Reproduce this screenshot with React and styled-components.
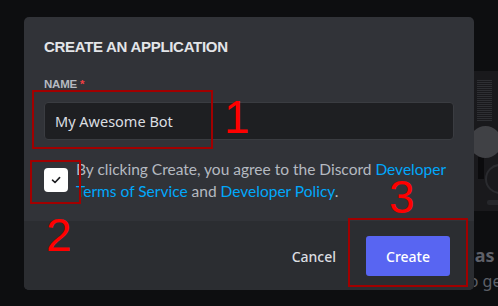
import React from 'react';
import styled, { createGlobalStyle } from 'styled-components';

const GlobalStyle = createGlobalStyle`
  html, body {
    margin: 0;
    padding: 0;
    background: #0d0e10;
    overflow: hidden;
  }
`;

const Page = styled.div`
  display: flex;
  align-items: flex-start;
  width: 498px;
  height: 306px;
  overflow: hidden;
  font-family: "Noto Sans", "Liberation Sans", sans-serif;
`;

const Modal = styled.div`
  position: relative;
  flex: none;
  width: 450px;
  margin: 17px 0 0 24px;
  background: #313338;
  border-radius: 5px;
  overflow: hidden;
  z-index: 2;
`;

const Body = styled.div`
  padding: 20px 20px 19px;
`;

const Title = styled.h1`
  margin: 0;
  font-family: "Liberation Sans", Arial, sans-serif;
  font-size: 15px;
  line-height: 20px;
  font-weight: 700;
  letter-spacing: -0.3px;
  color: #e3e5e8;
`;

const Label = styled.div`
  margin-top: 19px;
  font-family: "Liberation Sans", Arial, sans-serif;
  font-size: 11.5px;
  line-height: 16px;
  font-weight: 700;
  letter-spacing: -0.2px;
  color: #b5bac1;

  span {
    color: #f23f43;
    margin-left: 3px;
  }
`;

const Input = styled.div`
  margin-top: 10px;
  height: 38px;
  box-sizing: border-box;
  display: flex;
  align-items: center;
  padding: 0 10px;
  background: #1e1f22;
  border: 1px solid #3a3c41;
  border-radius: 4px;
  font-size: 14.5px;
  color: #dbdee1;
`;

const CheckRow = styled.div`
  margin-top: 18px;
  display: flex;
  align-items: center;
  gap: 8px;
`;

const Box = styled.div`
  flex: none;
  width: 24px;
  height: 24px;
  border-radius: 4px;
  background: #ffffff;
  display: flex;
  align-items: center;
  justify-content: center;
`;

const Terms = styled.p`
  margin: 0;
  font-family: Lato, "Noto Sans", sans-serif;
  font-size: 15.5px;
  line-height: 22px;
  color: #b5bac1;
`;

const Link = styled.a`
  color: #00a8fc;
  text-decoration: none;
`;

const Footer = styled.div`
  display: flex;
  justify-content: flex-end;
  align-items: center;
  gap: 14px;
  padding: 15px 24px 14px;
  background: #2b2d31;
`;

const Button = styled.button`
  height: 40px;
  padding: 0 ${p => (p.$primary ? '20px' : '16px')};
  border: none;
  border-radius: 3px;
  background: ${p => (p.$primary ? '#5865f2' : 'transparent')};
  color: ${p => (p.$primary ? '#ffffff' : '#dbdee1')};
  font-family: "Noto Sans", sans-serif;
  font-size: 14px;
  font-weight: 500;
`;

const Mark = styled.div`
  position: absolute;
  left: ${p => p.$x}px;
  top: ${p => p.$y}px;
  width: ${p => p.$w}px;
  height: ${p => p.$h}px;
  box-sizing: border-box;
  border: 2px solid #a10000;
`;

const Digit = styled.div`
  position: absolute;
  left: ${p => p.$x}px;
  top: ${p => p.$y}px;
  font-family: "Liberation Sans", Arial, sans-serif;
  font-size: 46px;
  line-height: 1;
  color: #ff0000;
`;

const Side = styled.div`
  flex: none;
  width: 24px;
  margin-top: 71px;
  display: flex;
  flex-direction: column;
  overflow: hidden;
`;

const Panel = styled.div`
  height: 140px;
  background: #19191c;
`;

const SideText = styled.div`
  white-space: nowrap;
  margin-left: -11px;
  color: #5e6068;
  font-size: ${p => (p.$bold ? '18px' : '16px')};
  font-weight: ${p => (p.$bold ? 700 : 400)};
  line-height: 24px;
  margin-top: ${p => p.$gap}px;
`;

export default function App() {
  return (
    <>
      <GlobalStyle />
      <Page>
        <Modal>
          <Body>
            <Title>CREATE AN APPLICATION</Title>
            <Label>
              NAME<span>*</span>
            </Label>
            <Input>My Awesome Bot</Input>
            <CheckRow>
              <Box>
                <svg width="12" height="12" viewBox="0 0 12 12">
                  <path d="M2.5 6.2 L5 8.5 L9.6 3.6" fill="none" stroke="#1e1f22" strokeWidth="1.6" strokeLinecap="round" strokeLinejoin="round" />
                </svg>
              </Box>
              <Terms>
                By clicking Create, you agree to the Discord <Link>Developer Terms of Service</Link> and{' '}
                <Link>Developer Policy</Link>.
              </Terms>
            </CheckRow>
          </Body>
          <Footer>
            <Button>Cancel</Button>
            <Button $primary>Create</Button>
          </Footer>

          <Mark $x={8} $y={73} $w={181} $h={59} />
          <Mark $x={6} $y={143} $w={51} $h={44} />
          <Mark $x={324} $y={201} $w={120} $h={69} />
          <Digit $x={200} $y={77}>1</Digit>
          <Digit $x={22} $y={195}>2</Digit>
          <Digit $x={365} $y={157}>3</Digit>
        </Modal>

        <Side>
          <Panel>
            <svg width="24" height="140" viewBox="0 0 24 140">
              {Array.from({ length: 21 }).map((_, i) => (
                <rect key={i} x="3" y={9 + i * 2} width="15" height="1" fill="#2e2f33" />
              ))}
              <circle cx="26" cy="108" r="14" fill="none" stroke="#2a2b2f" strokeWidth="2" />
              <rect x="4" y="86" width="6" height="22" fill="#0b0b0d" />
              <circle cx="11.5" cy="71" r="16" fill="#404145" />
              <rect x="13" y="129" width="14" height="5" rx="2" fill="#26272b" />
            </svg>
          </Panel>
          <SideText $bold $gap={32}>has yet</SideText>
          <SideText $gap={2}>to get</SideText>
        </Side>
      </Page>
    </>
  );
}
